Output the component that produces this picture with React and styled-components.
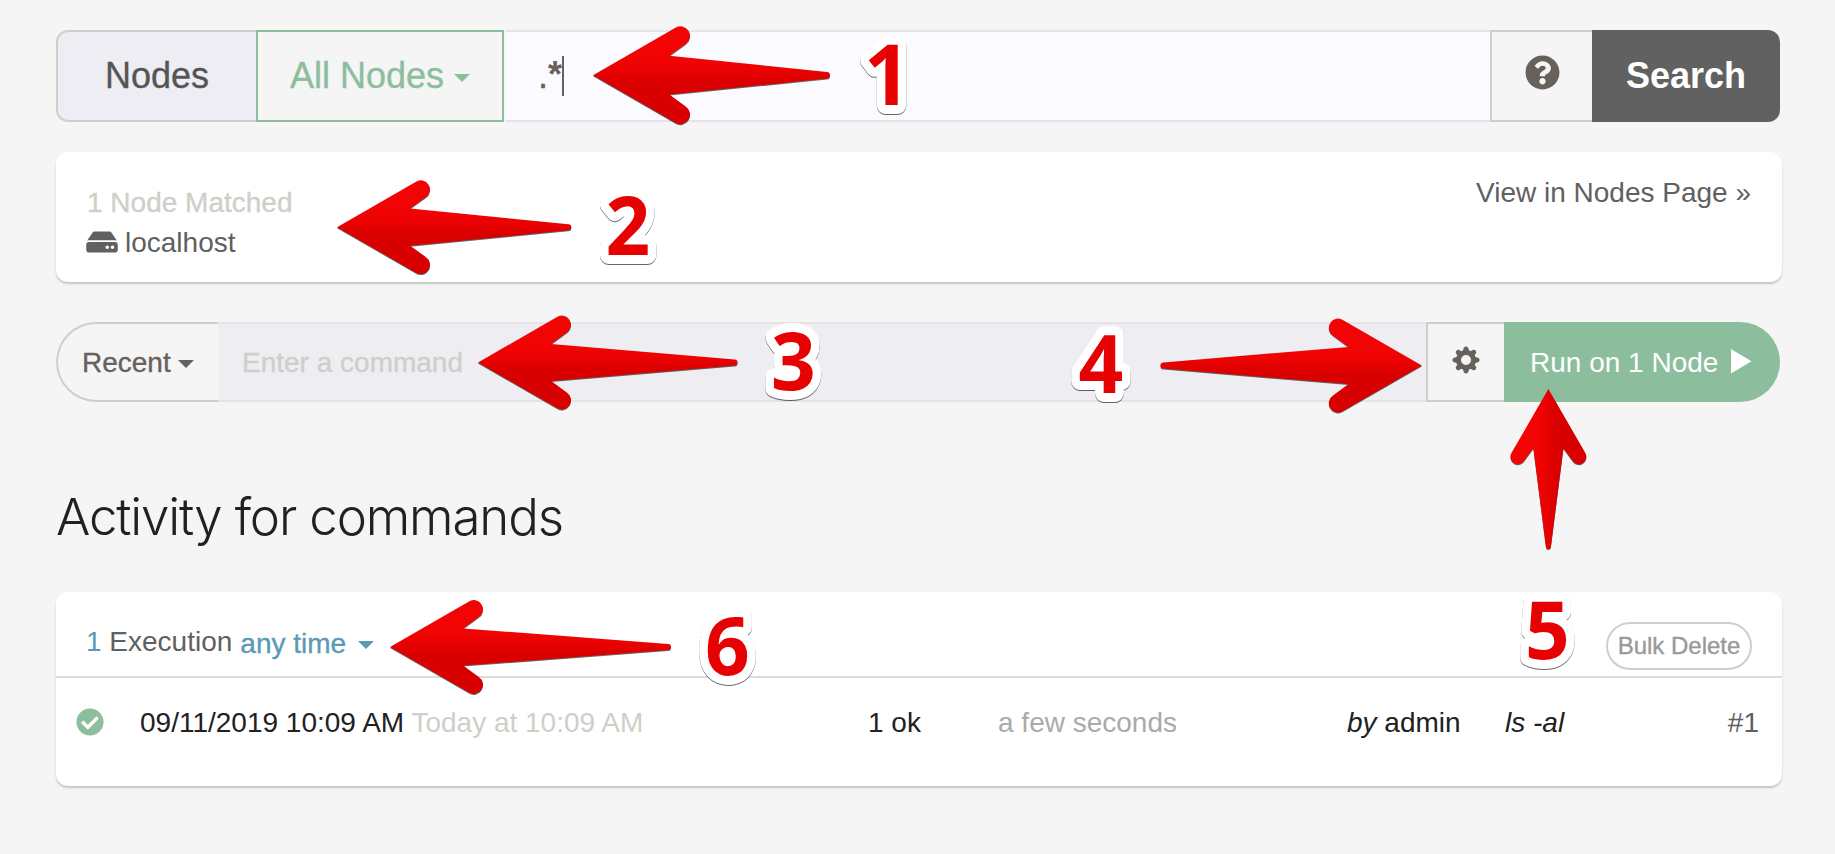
import React from "react";
import styled, { createGlobalStyle, css } from "styled-components";
import { FaHdd, FaQuestionCircle, FaCheckCircle } from "react-icons/fa";

const color = {
  page: "#f5f5f5",
  line: "#cfcfca",
  text: "#606060",
  dark: "#212121",
  warm: "#66615b",
  green: "#8cbe9e",
  blue: "#5a9ab5",
  faint: "#cfcfc9",
};

const Global = createGlobalStyle`
  * { box-sizing: border-box; }
  body {
    margin: 0;
    background: ${color.page};
    font-family: "Liberation Sans", Arial, sans-serif;
    font-size: 28px;
    line-height: 40px;
    color: ${color.text};
    white-space: nowrap;
  }
`;

const Page = styled.main`
  position: relative;
  display: flex;
  flex-direction: column;
  width: 1835px;
  height: 854px;
  padding: 30px 53px 0 56px;
  overflow: hidden;
`;

const Bar = styled.div`
  display: flex;
  flex: none;
  width: 1724px;
  height: ${(p) => p.$height}px;
  margin-bottom: ${(p) => p.$gap}px;
`;

const heavier = css`
  -webkit-text-stroke: 0.35px currentColor;
`;

const Segment = styled.div`
  display: flex;
  align-items: center;
  flex: none;
  width: ${(p) => p.$width}px;
  border: 2px solid ${color.line};
  border-right: 0;
`;

const NodesLabel = styled(Segment)`
  padding: 0 0 0 47px;
  background: #eeedf3;
  border-radius: 12px 0 0 12px;
  font-size: 36px;
  color: #555;
  ${heavier}
`;

const FilterButton = styled(Segment)`
  gap: 10px;
  padding: 0 0 0 32px;
  border: 2px solid ${color.green};
  font-size: 36px;
  color: ${color.green};
  ${heavier}
`;

const Caret = styled.i`
  width: 0;
  height: 0;
  margin-top: ${(p) => p.$drop || 0}px;
  border: 8px solid transparent;
  border-top-color: currentColor;
  border-bottom: 0;
`;

const Field = styled.div`
  display: flex;
  align-items: center;
  flex: 1;
  border: 2px solid #e3e3e8;
  border-width: 2px 0;
`;

const FilterField = styled(Field)`
  margin-left: 2px;
  padding: 0 0 0 32px;
  background: #fbfbff;
  font-size: 36px;
  color: ${color.warm};
  ${heavier}
  b {
    line-height: 36px;
    padding-bottom: 3px;
    -webkit-text-stroke: 0;
  }
`;

const TextCursor = styled.span`
  width: 2px;
  height: 40px;
  background: ${color.warm};
`;

const HelpButton = styled(Segment)`
  justify-content: center;
  padding: 0 0 8px 0;
  font-size: 35px;
  color: ${color.warm};
`;

const SearchButton = styled.div`
  display: flex;
  align-items: center;
  justify-content: center;
  width: 188px;
  background: #616161;
  border-radius: 0 12px 12px 0;
  font-size: 36px;
  font-weight: 700;
  color: #fff;
`;

const Card = styled.section`
  flex: none;
  width: 1726px;
  height: ${(p) => p.$height}px;
  background: #fff;
  border-radius: 12px;
  box-shadow: 0 2px 2px rgba(80, 80, 75, 0.28);
`;

const MatchCard = styled(Card)`
  display: flex;
  justify-content: space-between;
  margin-bottom: 40px;
  padding: 21px 31px 0;
`;

const Matches = styled.div`
  padding-top: 10px;
`;

const Matched = styled.div`
  color: ${color.faint};
  ${heavier}
`;

const Host = styled.div`
  display: flex;
  align-items: center;
  gap: 7px;
  margin-left: -1px;
`;

const HostIcon = styled(FaHdd)`
  width: 32px;
  height: 28px;
  margin-top: -2px;
`;

const RecentButton = styled(Segment)`
  gap: 7px;
  padding: 2px 0 0 24px;
  border-radius: 40px 0 0 40px;
  color: ${color.warm};
  ${heavier}
`;

const CommandField = styled(Field)`
  padding: 2px 0 0 24px;
  background: #eeedf2;
  color: ${color.faint};
  ${heavier}
`;

const SettingsButton = styled(Segment)`
  justify-content: center;
  padding-bottom: 4px;
  color: ${color.warm};
`;

const RunButton = styled.div`
  display: flex;
  align-items: center;
  width: 276px;
  gap: 13px;
  padding: 2px 0 0 26px;
  background: ${color.green};
  border-radius: 0 40px 40px 0;
  color: #fff;
`;

const PlayIcon = styled.svg`
  margin-top: -3px;
`;

const Title = styled.h1`
  flex: none;
  margin: 83px 0 43px;
  font: 300 51px/64px Inter, "Liberation Sans", sans-serif;
  letter-spacing: -1.15px;
  color: ${color.dark};
`;

const ActivityHeader = styled.header`
  display: flex;
  align-items: center;
  height: 86px;
  padding: 20px 30px 0;
  border-bottom: 2px solid #dcdcdc;
`;

const Count = styled.span`
  margin-right: 8px;
  padding-bottom: 4px;
  b {
    font-weight: 400;
    color: ${color.blue};
  }
`;

const Period = styled.span`
  display: flex;
  align-items: center;
  gap: 12px;
  color: ${color.blue};
  ${heavier}
`;

const BulkDelete = styled.div`
  width: 146px;
  height: 48px;
  margin: 4px 0 0 auto;
  border: 2px solid ${color.line};
  border-radius: 24px;
  font-size: 24px;
  line-height: 44px;
  text-align: center;
  color: #999;
  ${heavier}
`;

const ExecutionRow = styled.div`
  display: grid;
  grid-template-columns: 64px 728px 130px 349px 158px 1fr;
  align-items: center;
  height: 88px;
  padding: 2px 23px 0 20px;
  color: ${color.dark};
`;

const SuccessIcon = styled(FaCheckCircle)`
  width: 28px;
  height: 28px;
  margin-top: -2px;
  color: ${color.green};
`;

const Relative = styled.span`
  color: ${color.faint};
`;

const Duration = styled.span`
  color: #aaa;
`;

const CommandCell = styled.span`
  display: flex;
  justify-content: space-between;
`;

const ExecutionId = styled.span`
  color: ${color.text};
`;

/* Annotations float above the page at free positions. */
const Annotations = styled.svg`
  position: absolute;
  inset: 0;
  width: 100%;
  height: 100%;
  pointer-events: none;
`;

const Shadowed = styled.g`
  filter: drop-shadow(0 1px 0.5px rgba(0, 0, 0, 0.6));
`;

const Digit = styled.text`
  font-family: "Open Sans", sans-serif;
  font-weight: 700;
  fill: #e60202;
  stroke: #fff;
  stroke-width: 18px;
  stroke-linejoin: round;
  paint-order: stroke;
`;

const directions = {
  left: "",
  right: "matrix(-1 0 0 1 0 0)",
  up: "matrix(0 1 1 0 0 0)",
};

function Arrow({ x, y, length, scale = 0.958, point = "left" }) {
  const end = length / scale;
  return (
    <Shadowed>
      <path
        transform={`translate(${x} ${y}) ${directions[point]} scale(${scale})`}
        fill="url(#arrowRed)"
        d={`M0 0L82-47.3A9.5 9.5 0 0 1 92.7-31.2L76.4-19.4L${end - 3}-3.2Q${end}-3 ${end} 0Q${end} 3 ${end - 3} 3.2L76.4 19.4L92.7 31.2A9.5 9.5 0 0 1 82 47.3Z`}
      />
    </Shadowed>
  );
}

const arrows = [
  { x: 593, y: 75.2, length: 237, scale: 1 },
  { x: 337, y: 227.2, length: 234.3 },
  { x: 478, y: 362.5, length: 259.5 },
  { x: 1421.8, y: 365.5, length: 261.3, point: "right" },
  { x: 1548.4, y: 389, length: 160, scale: 0.775, point: "up" },
  { x: 390, y: 647, length: 281 },
];

const digits = [
  { n: 1, x: 864, y: 105, size: 85 },
  { n: 2, x: 605.5, y: 255, size: 81.5 },
  { n: 3, x: 771, y: 390, size: 81.5 },
  { n: 4, x: 1078.5, y: 393, size: 81.5 },
  { n: 5, x: 1525, y: 659, size: 81.5 },
  { n: 6, x: 705, y: 675, size: 81.5 },
];

function Cog() {
  return (
    <svg width="28" height="28" viewBox="-14 -14 28 28" fill="currentColor">
      {[0, 45, 90, 135, 180, 225, 270, 315].map((a) => (
        <path key={a} transform={`rotate(${a})`} d={a % 90 ? "M-3.3-8L-2-12.8Q0-14 2-12.8L3.3-8Z" : "M-3.6-8L-2-12.6Q0-14.6 2-12.6L3.6-8Z"} />
      ))}
      <path fillRule="evenodd" d="M0-10A10 10 0 1 1 0 10A10 10 0 1 1 0-10ZM0-5A5 5 0 1 0 0 5A5 5 0 1 0 0-5Z" />
    </svg>
  );
}

export default function App() {
  return (
    <Page>
      <Global />
      <Bar $height={92} $gap={30}>
        <NodesLabel $width={200}>Nodes</NodesLabel>
        <FilterButton $width={248}>
          All Nodes <Caret $drop={4} />
        </FilterButton>
        <FilterField>
          .<b>*</b>
          <TextCursor />
        </FilterField>
        <HelpButton $width={102}>
          <FaQuestionCircle />
        </HelpButton>
        <SearchButton>Search</SearchButton>
      </Bar>

      <MatchCard $height={130}>
        <Matches>
          <Matched>1 Node Matched</Matched>
          <Host>
            <HostIcon />
            localhost
          </Host>
        </Matches>
        <span>View in Nodes Page »</span>
      </MatchCard>

      <Bar $height={80} $gap={0}>
        <RecentButton $width={162}>
          Recent <Caret $drop={2} />
        </RecentButton>
        <CommandField>Enter a command</CommandField>
        <SettingsButton $width={78}>
          <Cog />
        </SettingsButton>
        <RunButton>
          Run on 1 Node
          <PlayIcon width="21" height="25" viewBox="0 0 21 25">
            <path d="M0 0L20.5 12.3L0 24.6Z" fill="#fff" />
          </PlayIcon>
        </RunButton>
      </Bar>

      <Title>Activity for commands</Title>

      <Card $height={194}>
        <ActivityHeader>
          <Count>
            <b>1</b> Execution
          </Count>
          <Period>
            any time <Caret $drop={2} />
          </Period>
          <BulkDelete>Bulk Delete</BulkDelete>
        </ActivityHeader>
        <ExecutionRow>
          <SuccessIcon />
          <span>
            09/11/2019 10:09 AM <Relative>Today at 10:09 AM</Relative>
          </span>
          <span>1 ok</span>
          <Duration>a few seconds</Duration>
          <span>
            <em>by</em> admin
          </span>
          <CommandCell>
            <em>ls -al</em>
            <ExecutionId>#1</ExecutionId>
          </CommandCell>
        </ExecutionRow>
      </Card>

      <Annotations>
        <defs>
          <linearGradient id="arrowRed" gradientUnits="userSpaceOnUse" x1="0" y1="-20" x2="0" y2="20">
            <stop offset="0" stopColor="#f20404" />
            <stop offset="0.35" stopColor="#ec0202" />
            <stop offset="0.7" stopColor="#da0000" />
            <stop offset="1" stopColor="#d80000" />
          </linearGradient>
        </defs>
        {arrows.map((a) => (
          <Arrow key={`${a.x}-${a.y}`} {...a} />
        ))}
        <Shadowed>
          {digits.map((d) => (
            <Digit
              key={d.n}
              transform={`translate(${d.x} ${d.y}) scale(0.96 1)`}
              fontSize={d.size}
            >
              {d.n}
            </Digit>
          ))}
        </Shadowed>
      </Annotations>
    </Page>
  );
}
